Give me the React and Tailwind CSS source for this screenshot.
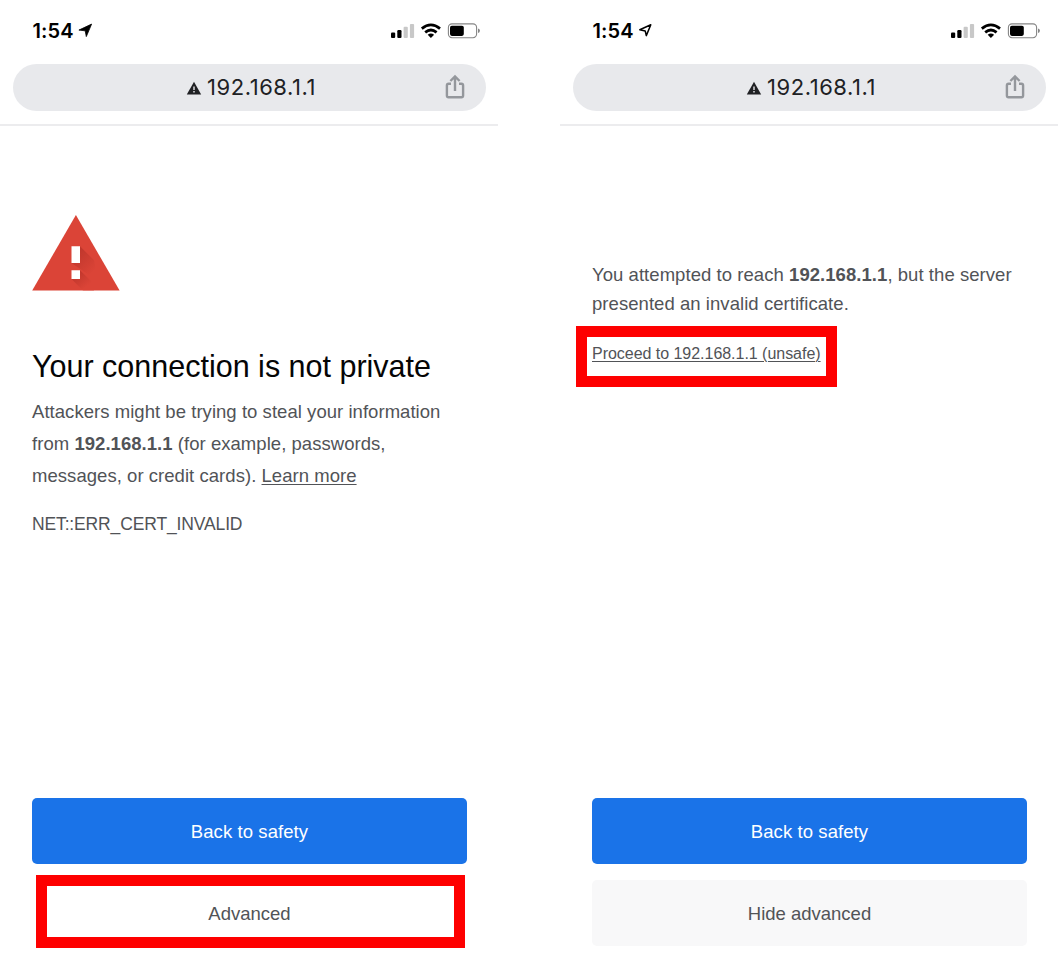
function LocationArrow({ filled }) {
  return (
    <svg className="-mt-px ml-[4px] h-[15px] w-[15px]" viewBox="0 0 15 15">
      {filled ? (
        <path d="M13.6 1.1 8.3 13.6 7.2 7.8.9 7.1Z" fill="#000" stroke="#000" strokeWidth=".8" strokeLinejoin="round" />
      ) : (
        <path d="M12.8 1.8 8.3 12.6 7.2 7.9 1.8 6.8Z" fill="none" stroke="#000" strokeWidth="1.5" strokeLinejoin="round" />
      )}
    </svg>
  );
}

function StatusIcons() {
  return (
    <svg className="h-5 w-[92px]" viewBox="0 0 92 20">
      <rect x="1" y="11.4" width="4.2" height="5.6" rx="1.1" />
      <rect x="7.3" y="9.1" width="4.2" height="7.9" rx="1.1" />
      <rect x="13.6" y="5.8" width="4.2" height="11.2" rx="1" fill="#c8c8c8" />
      <rect x="19.9" y="2.9" width="4.2" height="14.1" rx="1" fill="#c8c8c8" />
      <g fill="none" stroke="#000" strokeWidth="2.7">
        <path d="M31.8 7.6Q40.9 0 50 7.6" />
        <path d="M35.2 11.4Q40.9 6.6 46.6 11.4" />
      </g>
      <path d="M37.7 13.7Q40.9 11.3 44.1 13.7L40.9 16.9Z" />
      <rect x="58.4" y="2.9" width="28.2" height="13.8" rx="3.6" fill="#fff" stroke="#858585" strokeWidth="1.1" />
      <rect x="60" y="4.7" width="13.8" height="10.2" rx="1.8" />
      <path d="M88 7.4Q89.9 7.8 89.9 9.7T88 12Z" fill="#858585" />
    </svg>
  );
}

function Header({ filled }) {
  return (
    <header className="flex h-[126px] w-[498px] flex-col border-b-2 border-[#ececee]">
      <div className="flex h-16 items-start justify-between pt-[21px] pr-[16px] pl-8">
        <div className="flex h-5 items-center font-['Inter',sans-serif] text-[20px] leading-5 font-semibold tracking-[0.1px] text-black">
          <span className="pl-[0.5px]">1:54</span>
          <LocationArrow filled={filled} />
        </div>
        <StatusIcons />
      </div>
      <div className="ml-[13px] flex h-[47px] w-[473px] items-center rounded-full bg-[#e8e9ec]">
        <div className="ml-[173px] flex w-[242px] items-center">
          <svg className="mt-px h-[14px] w-[16px]" viewBox="0 0 16 14">
            <path d="M8 .8 15.2 13.4H.8Z" fill="#202124" />
            <path d="M7.3 5.4h1.4v3.5H7.3zM7.3 10.1h1.4v1.5H7.3z" fill="#e8e9ec" />
          </svg>
          <span className="-mt-[2px] ml-[5px] font-['Inter',sans-serif] text-[22px] leading-7 tracking-[0.55px] whitespace-nowrap text-[#202124]">
            192.168.1.1
          </span>
        </div>
        <svg className="-mt-[2px] ml-[16px] h-[26px] w-[22px]" viewBox="0 0 22 26" fill="none" stroke="#94979c" strokeWidth="2.4">
          <path d="M7 9.8H4.6Q2.9 9.8 2.9 11.5V21.6Q2.9 23.3 4.6 23.3H17.4Q19.1 23.3 19.1 21.6V11.5Q19.1 9.8 17.4 9.8H15" />
          <path d="M11 17V2.7M6.4 7 11 2.4 15.6 7" />
        </svg>
      </div>
    </header>
  );
}

function WarningTriangle() {
  return (
    <svg className="h-[77px] w-[88px]" viewBox="0 0 88 77">
      <defs>
        <linearGradient id="shade" x1="42" y1="36" x2="62" y2="56" gradientUnits="userSpaceOnUse">
          <stop offset="0" stopColor="#b02f26" />
          <stop offset="1" stopColor="#db4437" />
        </linearGradient>
        <linearGradient id="shade-low" x1="42" y1="58" x2="54" y2="72" gradientUnits="userSpaceOnUse">
          <stop offset="0" stopColor="#b02f26" />
          <stop offset="1" stopColor="#db4437" />
        </linearGradient>
      </defs>
      <path d="M43.9 0 87.6 75.5H.2Z" fill="#db4437" />
      <path d="M48 31.2 62 45.2 66 66 39.5 48H48Z" fill="url(#shade)" opacity=".7" />
      <path d="M48 55.3 60 67 62 75.5H51L39.5 64H48Z" fill="url(#shade-low)" opacity=".7" />
      <path d="M39.5 31.2H48V48H39.5zM39.5 55.3H48V64H39.5z" fill="#fff" />
    </svg>
  );
}

function Primary() {
  return (
    <button className="block h-[66px] w-[435px] rounded-[5px] bg-[#1a73e8] pt-[2px] text-[18.5px] tracking-[0.08px] text-white">
      Back to safety
    </button>
  );
}

export default function App() {
  return (
    <div className="flex h-[966px] w-[1061px] gap-[62px] overflow-hidden bg-white font-['Liberation_Sans',Arial,sans-serif] text-[18.5px] text-[#515357]">
      <section className="flex w-[498px] shrink-0 flex-col">
        <Header filled />
        <main className="flex h-[672px] flex-col items-start pt-[89px] pl-8 whitespace-nowrap">
          <WarningTriangle />
          <h1 className="mt-[54px] text-[30.5px] leading-10 text-[#050505]">Your connection is not private</h1>
          <p className="mt-[10px] leading-8 tracking-[0.045px]">
            Attackers might be trying to steal your information
            <br />
            from <b>192.168.1.1</b> (for example, passwords,
            <br />
            messages, or credit cards).{" "}
            <a className="underline decoration-1 underline-offset-[2px]">Learn more</a>
          </p>
          <p className="mt-4 text-[17.5px] leading-8 tracking-[-0.14px]">NET::ERR_CERT_INVALID</p>
        </main>
        <footer className="pl-8">
          <Primary />
          <button className="mt-[11px] ml-1 block h-[73px] w-[429px] border-[11px] border-[#fe0000] bg-white">
            <span className="block pt-[4px] pr-[2px]">Advanced</span>
          </button>
        </footer>
      </section>
      <section className="flex w-[499px] shrink-0 flex-col">
        <Header />
        <main className="flex h-[672px] flex-col items-start pt-[134px] pl-4 whitespace-nowrap">
          <p className="ml-4 leading-[29px] tracking-[0.055px]">
            You attempted to reach <b>192.168.1.1</b>, but the server
            <br />
            presented an invalid certificate.
          </p>
          <div className="mt-2 flex h-[61px] w-[261px] border-[11px] border-[#fe0000] pt-[5px] pl-[5px]">
            <a className="text-[16px] leading-6 tracking-[-0.03px] underline decoration-1 underline-offset-[2px]">
              Proceed to 192.168.1.1 (unsafe)
            </a>
          </div>
        </main>
        <footer className="pl-8">
          <Primary />
          <button className="mt-4 block h-[66px] w-[435px] rounded-[5px] bg-[#f8f8f9] pt-[2px]">Hide advanced</button>
        </footer>
      </section>
    </div>
  );
}
